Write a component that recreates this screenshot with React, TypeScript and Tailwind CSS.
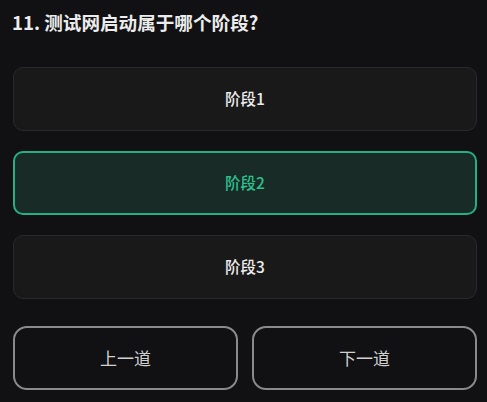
const FONT = { fontFamily: '"Noto Sans CJK SC", "Noto Sans", sans-serif' };

const options = ["阶段1", "阶段2", "阶段3"];

export default function App() {
  const selected = 1;
  return (
    <div className="w-[487px] h-[402px] bg-[#111113] pl-[13px] pr-[10px] pt-[8px] overflow-hidden" style={FONT}>
      <h1 className="text-[18.6px] font-semibold text-[#ececec] leading-[28px] -ml-[1px]">11. 测试网启动属于哪个阶段?</h1>
      <div className="mt-[31px] flex flex-col gap-[20px]">
        {options.map((o, i) => (
          <div
            key={o}
            className={
              i === selected
                ? "h-[64px] rounded-[10px] border-2 border-[#25b083] bg-[#182b26] flex items-center justify-center text-[15.5px] font-medium text-[#2cc08f]"
                : "h-[64px] rounded-[10px] border border-[#29292b] bg-[#19191a] flex items-center justify-center text-[15.5px] font-medium text-[#ececec]"
            }
          >
            {o}
          </div>
        ))}
      </div>
      <div className="mt-[27px] grid grid-cols-2 gap-[14px]">
        <button className="h-[64px] rounded-[14px] border-2 border-[#8a8a8c] text-[17px] text-[#d0d0d0]">上一道</button>
        <button className="h-[64px] rounded-[14px] border-2 border-[#8a8a8c] text-[17px] text-[#d0d0d0]">下一道</button>
      </div>
    </div>
  );
}
